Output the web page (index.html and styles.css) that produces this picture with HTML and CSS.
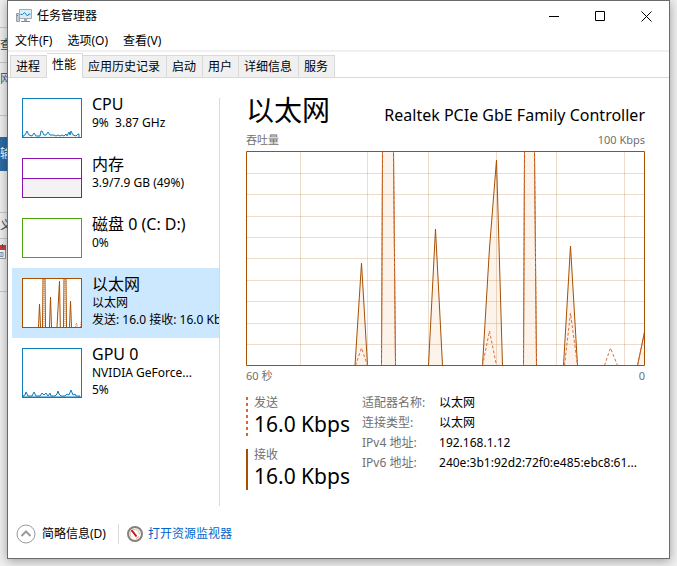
FILE: index.html
```html
<!DOCTYPE html>
<html lang="zh-CN">

<head>
  <meta charset="UTF-8">
  <title>任务管理器</title>
  <link rel="stylesheet" href="styles.css">
</head>

<body>

  <div class="desktop">
    <!-- sliver of the application behind the window -->
    <div class="behind" aria-hidden="true">
      <div class="row toolbar"></div>
      <div class="row find"><span>查</span></div>
      <div class="row net"><span>网</span></div>
      <div class="row gap"></div>
      <div class="row send"><span>输</span></div>
      <div class="row blank"></div>
      <div class="row mean"><span>义</span></div>
      <div class="row date">
        <svg width="6" height="15" viewBox="6 0 6 15"><path d="M0 1.500h11.500v13H0z" fill="#fff" stroke="#999"/><path d="M0 1h12v5H0z" fill="#d8393b"/><path d="M8.500 0v4" stroke="#555"/><path d="M2 8.500h7v4H2zM7 8v5" fill="none" stroke="#7d9ab5"/></svg>
      </div>
    </div>

    <div class="window">
      <header class="titlebar">
        <svg class="app-icon" width="17" height="16" viewBox="0 0 17 16">
          <path d="M.5 5.500h3v8h-3z" fill="#c5c9cc" stroke="#9aa0a4"/>
          <path d="M1 7.500h1" stroke="#37a34a"/>
          <path d="M3.500 1.500h12v9h-12z" fill="#d9ecf7" stroke="#a3a9ad"/>
          <path d="M4.500 6.500h2l2-2 3 3.500 1.500-2h1.500" fill="none" stroke="#1583bd"/>
          <path d="M8 11h3v2H8z" fill="#a4aaae"/>
          <path d="M5 13.500h9" stroke="#868d92"/>
        </svg>
        <h1>任务管理器</h1>
        <div class="controls">
          <button aria-label="最小化"><svg width="11" height="11" viewBox="0 0 11 11"><path d="M0 5.500h10"/></svg></button>
          <button aria-label="最大化"><svg width="11" height="11" viewBox="0 0 11 11"><path d="M.5.5h9v9h-9z"/></svg></button>
          <button aria-label="关闭"><svg width="11" height="11" viewBox="0 0 11 11"><path d="M.5.5l10 10M10.500.5l-10 10"/></svg></button>
        </div>
      </header>

      <nav class="menu">
        <button>文件(F)</button>
        <button>选项(O)</button>
        <button>查看(V)</button>
      </nav>

      <div class="tabs" role="tablist">
        <button role="tab">进程</button>
        <button role="tab" class="active" aria-selected="true">性能</button>
        <button role="tab">应用历史记录</button>
        <button role="tab">启动</button>
        <button role="tab">用户</button>
        <button role="tab">详细信息</button>
        <button role="tab">服务</button>
      </div>

      <div class="content">
        <div class="sidebar">
          <button class="item">
            <svg class="thumb cpu" viewBox="0 0 58 38">
              <path d="M0 37l2-1 2-4 2 4 3 1 2-3 2 3 4 0 1-5 1 0 2 4 2 0 2-3 2 3 4 0 2 1 2-1 2 1 2-1 2 1 2-2 1 2 2-4 1 3 1-4 2 4 3 1 2-2 1 0v4H0z"/>
            </svg>
            <span class="info"><span class="name">CPU</span><span class="sub">9%&nbsp; 3.87 GHz</span></span>
          </button>
          <button class="item">
            <svg class="thumb memory" viewBox="0 0 58 38"><path d="M-1 19.500h60V39H-1z"/></svg>
            <span class="info"><span class="name">内存</span><span class="sub">3.9/7.9 GB (49%)</span></span>
          </button>
          <button class="item">
            <svg class="thumb disk" viewBox="0 0 58 38"></svg>
            <span class="info"><span class="name">磁盘 0 (C: D:)</span><span class="sub">0%</span></span>
          </button>
          <button class="item selected">
            <svg class="thumb tall net" viewBox="0 0 58 48">
              <path d="M15.500 48l1-23 1 23M19.500 48l.5-48M22 0l.5 48M26.500 48l1-30 1 30M34 48l2.500-46 .8 46M40.500 48l.5-48M43 0l.5 48M46.500 48l1-26 1 26"/>
              <path class="sent" d="M21 0v48M42 0v48M52.500 48l1-4 1 4M57.500 48l1-7"/>
            </svg>
            <span class="info"><span class="name">以太网</span><span class="sub">以太网</span><span class="sub">发送: 16.0 接收: 16.0 Kbps</span></span>
          </button>
          <button class="item">
            <svg class="thumb tall cpu" viewBox="0 0 58 48">
              <path d="M0 47l2-1 1-3 2 4 4 0 2-4 2 4 4 0 2-3 2 2 2-2 2 3 2-3 1 3 4 0 2-2 1-3 1 3 2 2 4 0 2-2 2 1 2-5 2 5 2-1 1 2 4 0v1H0z"/>
            </svg>
            <span class="info"><span class="name">GPU 0</span><span class="sub">NVIDIA GeForce...</span><span class="sub">5%</span></span>
          </button>
        </div>

        <div class="divider"></div>

        <main class="detail">
          <div class="heading">
            <h2>以太网</h2>
            <span>Realtek PCIe GbE Family Controller</span>
          </div>
          <div class="axis"><span>吞吐量</span><span>100 Kbps</span></div>
          <svg class="chart" viewBox="0 0 399 215" preserveAspectRatio="none" role="img" aria-label="吞吐量">
            <path class="received-fill" d="M109 214.500L115.500 112 121.500 214.500zM135.500 214.500L136.500 0H147.500L149.500 214.500zM182.500 214.500L189.500 78 196.500 214.500zM236.500 214.500L243.500 97 250.500 9 256.500 214.500zM277.500 214.500L278.500 0H288.500L290.500 214.500zM317.500 214.500L324.500 95 331.500 214.500zM391.500 214.500L398.500 181V214.500z"/>
            <path class="grid" d="M54.500 0V215M121.500 0V215M182.500 0V215M250.500 0V215M310.500 0V215M378.500 0V215M0 22.500H399M0 43.500H399M0 65.500H399M0 86.500H399M0 107.500H399M0 129.500H399M0 150.500H399M0 172.500H399M0 193.500H399"/>
            <path class="received" d="M109 214.500L115.500 112 121.500 214.500M135.500 214.500L136.500 0M147.500 0L149.500 214.500M182.500 214.500L189.500 78 196.500 214.500M236.500 214.500L243.500 97 250.500 9 256.500 214.500M277.500 214.500L278.500 0M288.500 0L290.500 214.500M317.500 214.500L324.500 95 331.500 214.500M391.500 214.500L398.500 181"/>
            <path class="sent" d="M109.500 214.500L115.500 197 121.500 214.500M135.500 214.500L136.500 0M147.500 0L149.500 214.500M236.500 214.500L243.500 180 250.500 214.500M277.500 214.500L278.500 0M288.500 0L290.500 214.500M318.500 214.500L324.500 162 331.500 214.500M358.500 214.500L364.500 197 371.500 214.500M391.500 214.500L398.500 181"/>
            <path class="frame" d="M.5.5h398v214H.5z"/>
          </svg>
          <div class="axis below"><span>60 秒</span><span>0</span></div>

          <div class="stats">
            <div class="rates">
              <div class="rate out"><span>发送</span><strong>16.0 Kbps</strong></div>
              <div class="rate in"><span>接收</span><strong>16.0 Kbps</strong></div>
            </div>
            <dl class="facts">
              <dt>适配器名称:</dt><dd>以太网</dd>
              <dt>连接类型:</dt><dd>以太网</dd>
              <dt>IPv4 地址:</dt><dd>192.168.1.12</dd>
              <dt>IPv6 地址:</dt><dd>240e:3b1:92d2:72f0:e485:ebc8:61...</dd>
            </dl>
          </div>
        </main>
      </div>

      <footer class="footer">
        <button class="fewer">
          <svg width="20" height="20" viewBox="0 0 20 20"><circle cx="10" cy="10" r="9" fill="#fff" stroke="#999"/><path d="M5.500 12L10 7.500l4.500 4.500" fill="none" stroke="#999" stroke-width="2"/></svg>
          简略信息(D)
        </button>
        <a class="monitor" href="#">
          <svg width="16" height="16" viewBox="0 0 16 16"><circle cx="8" cy="8" r="7" fill="#faf9f5" stroke="#85817b" stroke-width="2"/><path d="M4 11a5 5 0 0 1 0-6M6 3.500a5 5 0 0 1 6.500 5" fill="none" stroke="#c9c5bb"/><path d="M4.500 4l5 6.500" stroke="#cf1414" stroke-width="2"/><path d="M9 12.500l3-2" stroke="#e2a28d"/></svg>
          打开资源监视器
        </a>
      </footer>
    </div>
  </div>

</body>
</html>
```
FILE: styles.css
```css
* { box-sizing: border-box; }
body { margin: 0; background: #f0f0f0; color: #000; font: 12px/16px "Noto Sans", "Noto Sans CJK SC", sans-serif; }
button { margin: 0; padding: 0; border: 0; background: none; color: inherit; font: inherit; }
h1, h2, dl, dd { margin: 0; font-weight: normal; }
svg { display: block; flex: none; }

.desktop { display: grid; grid-template-columns: 7px 1fr; min-height: 100vh; padding: 0 7px 7px 0; }

.behind { overflow: hidden; }
.behind .row { display: flex; align-items: center; border-bottom: 1px solid #c8c8c8; color: #444; }
.behind .toolbar { height: 28px; }
.behind .find { height: 35px; }
.behind .net { height: 53px; padding-bottom: 20px; color: #28679c; }
.behind .gap { height: 21px; border: 0; }
.behind .send { height: 34px; border: 0; background: #2e6ba6; color: #fff; }
.behind .blank { height: 42px; }
.behind .mean { height: 26px; }
.behind .date { height: 53px; align-items: flex-start; padding-top: 5px; }

/* window */
.window { display: flex; flex-direction: column; min-width: 0; border: 1px solid #6b6b6b; background: #fff; box-shadow: 0 2px 10px rgba(0,0,0,0.35); }
.titlebar { display: flex; align-items: center; height: 30px; padding-left: 8px; }
.titlebar h1 { flex: 1; padding-left: 4px; font-size: 12px; }
.controls { display: flex; }
.controls button { display: flex; justify-content: center; align-items: center; width: 46px; height: 29px; }
.controls path { fill: none; stroke: #000; }

.menu { display: flex; gap: 15px; height: 21px; padding-left: 7px; border-bottom: 2px solid #f0f0f0; }

.tabs { display: flex; align-items: flex-end; height: 26px; padding-left: 2px; box-shadow: inset 0 -1px #d9d9d9; }
.tabs button { height: 23px; padding: 0 6px 0 5px; border: 1px solid #d9d9d9; border-left: 0; background: #f0f0f0; }
.tabs button:first-child { border-left: 1px solid #d9d9d9; }
.tabs .active { height: 25px; padding-bottom: 2px; border-bottom: 0; background: #fff; }

/* performance page */
.content { display: flex; flex: 1; padding: 10px 24px 0 4px; }
.sidebar { flex: none; width: 207px; }
.item { display: flex; gap: 10px; width: 100%; height: 60px; padding: 0 0 0 10px; overflow: hidden; text-align: left; }
.item:nth-child(n+4) { height: 70px; }
.selected { background: #cce8ff; }
.thumb { width: 60px; height: 40px; margin-top: 10px; border: 1px solid; background: #fff; fill: none; stroke: currentColor; }
.thumb.tall { height: 50px; }
.cpu { color: #117dbb; fill: #f1f6fa; }
.memory { color: #8b12ae; fill: #f4f2f4; }
.disk { color: #4da60c; }
.net { color: #a74f01; }
.thumb .sent { stroke-dasharray: 1 1; }
.info { display: flex; flex-direction: column; padding-top: 6px; white-space: nowrap; }
.name { font-size: 16px; line-height: 20px; }
.sub { line-height: 17px; }
.divider { flex: none; width: 1px; margin: 10px 26px 3px 0; background: #d9d9d9; }

.detail { flex: 1; min-width: 0; }
.heading { display: flex; justify-content: space-between; align-items: baseline; height: 44px; line-height: 44px; white-space: nowrap; }
.heading h2 { font-size: 28px; }
.heading span { font-size: 16px; }
.axis { display: flex; justify-content: space-between; height: 19px; color: #707070; font-size: 11px; }
.below { height: 26px; padding-top: 2px; }
.chart { width: 100%; height: 215px; fill: none; }
.chart path { vector-effect: non-scaling-stroke; }
.chart .grid { stroke: #a74f01; stroke-opacity: 0.2; }
.chart .received-fill { fill: #fcf3eb; }
.chart .received, .chart .frame { stroke: #a74f01; }
.sent { stroke: #e0703c; stroke-dasharray: 3 2; }

.stats { display: flex; gap: 12px; padding-top: 5px; }
.rates { display: flex; flex: none; flex-direction: column; gap: 11px; }
.rate { display: flex; flex-direction: column; height: 41px; padding-left: 8px; background: linear-gradient(#a74f01, #a74f01) left / 2px 100% no-repeat; color: #707070; line-height: 12px; }
.rate strong { color: #000; font-size: 21px; font-weight: normal; line-height: 30px; white-space: nowrap; }
.out { background-image: repeating-linear-gradient(#e0662d 0 3px, transparent 3px 6px); }
.facts { display: grid; grid-template-columns: 77px 1fr; grid-auto-rows: 20px; align-content: start; min-width: 0; line-height: 12px; white-space: nowrap; }
.facts dt { color: #707070; }

.footer { display: flex; align-items: center; height: 49px; padding: 0 8px; }
.fewer, .monitor { display: flex; align-items: center; }
.fewer { gap: 6px; padding-right: 12px; border-right: 1px solid #d9d9d9; }
.monitor { gap: 5px; padding-left: 8px; color: #0066cc; text-decoration: none; }
```
